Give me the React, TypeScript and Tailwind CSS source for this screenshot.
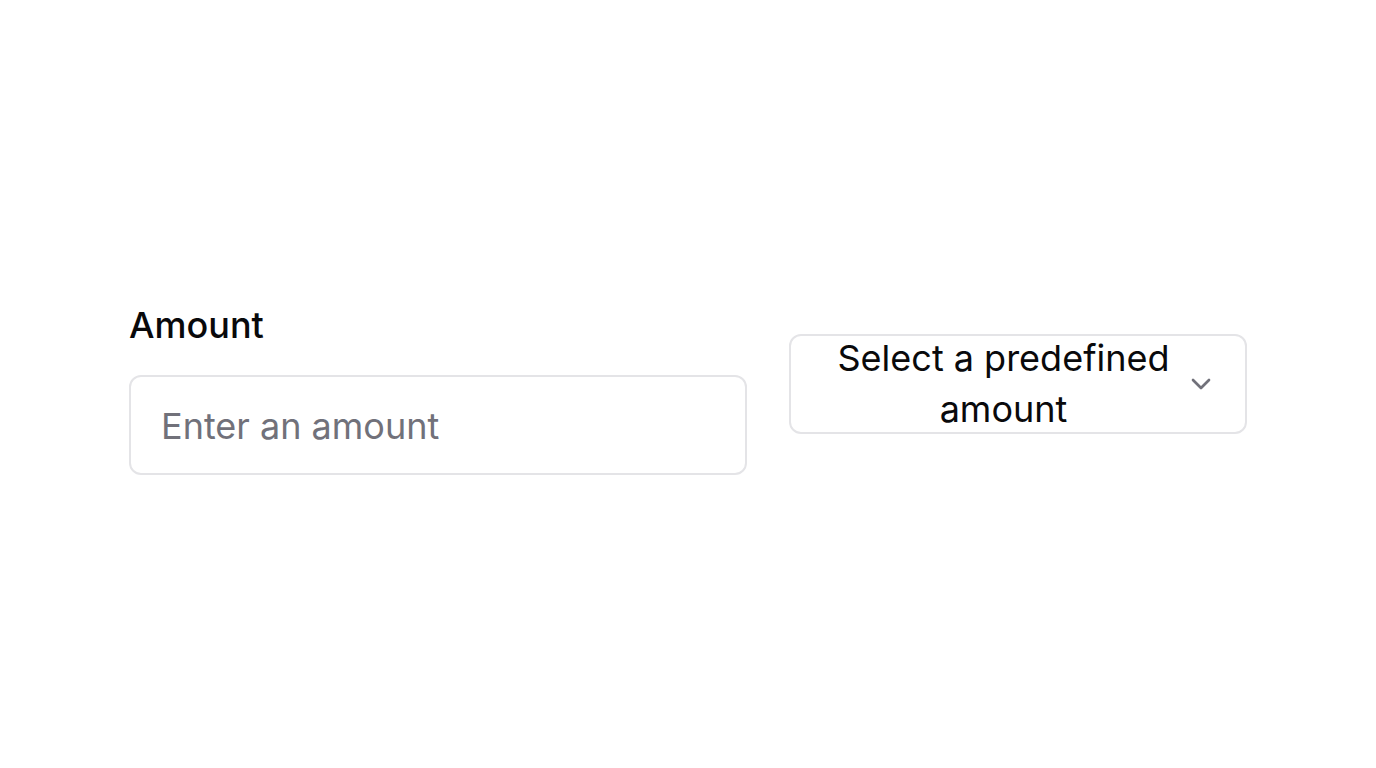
import { ChevronDown } from "lucide-react";

export default function App() {
  return (
    <div
      className="flex h-[768px] w-full items-center justify-center bg-white"
      style={{ fontFamily: "Inter, 'Noto Sans', sans-serif" }}
    >
      <div className="flex w-[1118px] items-center gap-[42px]">
        <div className="flex w-[618px] shrink-0 flex-col gap-[23px] pt-[4px]">
          <label
            htmlFor="amount"
            className="text-[36px] font-medium leading-[54px] text-[#09090b]"
          >
            Amount
          </label>
          <input
            id="amount"
            type="text"
            placeholder="Enter an amount"
            className="h-[100px] w-full rounded-[12px] border-2 border-[#e4e4e7] bg-white px-[30px] pt-[2px] text-[36px] text-[#09090b] outline-none placeholder:text-[#71717a]"
          />
        </div>

        <button
          type="button"
          className="flex h-[100px] w-[458px] shrink-0 items-center rounded-[12px] border-2 border-[#e4e4e7] bg-white pl-[31px] pr-[28px] text-[#09090b]"
        >
          <span className="flex-1 text-center text-[36px] leading-[51px]">
            Select a predefined amount
          </span>
          <ChevronDown size={32} strokeWidth={2} className="shrink-0 text-[#71717a]" />
        </button>
      </div>
    </div>
  );
}
